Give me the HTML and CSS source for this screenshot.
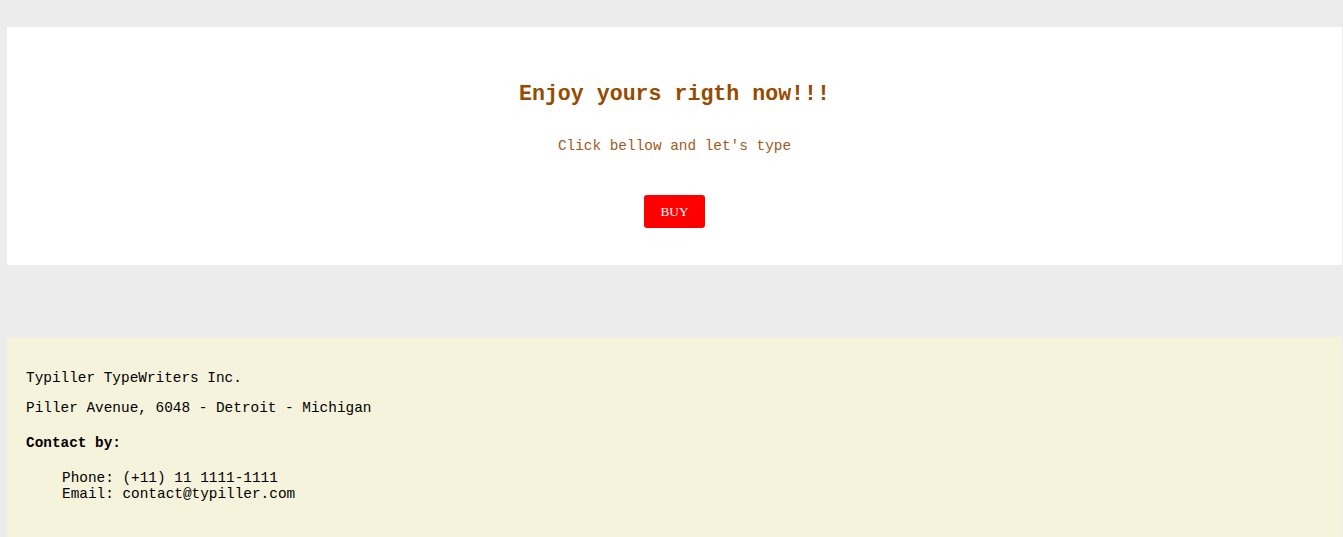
FILE: index.html
```html
<!DOCTYPE html>
<html lang="en">
<head>
<meta charset="utf-8">
<title>Typiller TypeWriters</title>
<link rel="stylesheet" href="styles.css">
</head>
<body>
  <section class="hero">
    <h1 class="hero-title">Enjoy yours rigth now!!!</h1>
    <p class="hero-sub">Click bellow and let's type</p>
    <button class="buy-btn">BUY</button>
  </section>
  <footer class="footer">
    <p class="footer-line">Typiller TypeWriters Inc.</p>
    <p class="footer-line">Piller Avenue, 6048 - Detroit - Michigan</p>
    <p class="footer-contact">Contact by:</p>
    <div class="contact-list">
      <div>Phone: (+11) 11 1111-1111</div>
      <div>Email: contact@typiller.com</div>
    </div>
  </footer>
</body>
</html>
```
FILE: styles.css
```css
html, body {
  margin: 0;
  background: #ececec;
}
body {
  padding: 27px 1px 0 7px;
  font-family: "Liberation Mono", "Courier New", monospace;
  font-size: 14.4px;
  line-height: 16px;
}
.hero {
  background: #ffffff;
  text-align: center;
  padding: 55px 0 37px;
  display: flex;
  flex-direction: column;
  align-items: center;
}
.hero-title {
  margin: 0;
  font-size: 21.6px;
  line-height: 25px;
  font-weight: bold;
  color: #964b00;
}
.hero-sub {
  margin: 31px 0 0;
  color: #a05a1e;
}
.buy-btn {
  margin-top: 41px;
  height: 33px;
  width: 61px;
  background: #ff0000;
  color: #ffffff;
  border: none;
  border-radius: 3px;
  font-family: "Liberation Serif", "Times New Roman", serif;
  font-size: 13.33px;
  padding: 0;
  cursor: pointer;
}
.footer {
  margin-top: 72px;
  background: #f5f3dc;
  padding: 33px 19px 36px;
  min-height: 140px;
  color: #000;
}
.footer-line {
  margin: 0 0 14px;
}
.footer-contact {
  margin: 19px 0 19px;
  font-weight: bold;
}
.contact-list {
  padding-left: 36px;
}
```
